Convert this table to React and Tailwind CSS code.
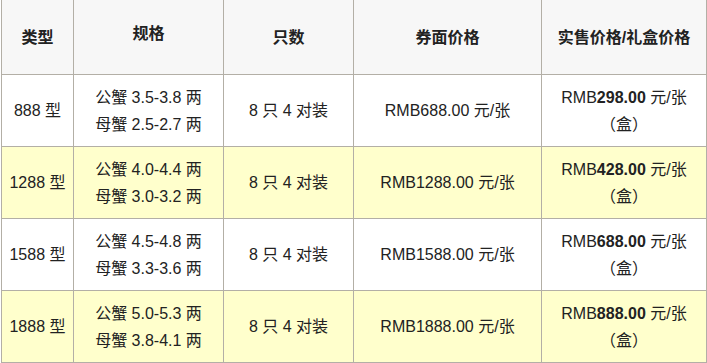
import React from 'react';

const rows = [
    { type: '888 型', male: '公蟹 3.5-3.8 两', female: '母蟹 2.5-2.7 两', face: 'RMB688.00 元/张', price: '298.00', alt: false },
    { type: '1288 型', male: '公蟹 4.0-4.4 两', female: '母蟹 3.0-3.2 两', face: 'RMB1288.00 元/张', price: '428.00', alt: true },
    { type: '1588 型', male: '公蟹 4.5-4.8 两', female: '母蟹 3.3-3.6 两', face: 'RMB1588.00 元/张', price: '688.00', alt: false },
    { type: '1888 型', male: '公蟹 5.0-5.3 两', female: '母蟹 3.8-4.1 两', face: 'RMB1888.00 元/张', price: '888.00', alt: true },
];

const Cell = ({ children, className = '' }) => (
    <div className={`flex flex-col items-center justify-center text-center border-r border-b border-[#b3afa6] ${className}`}>
        {children}
    </div>
);

const HeadCell = ({ children, className = '' }) => (
    <Cell className={`h-[75px] bg-[#f7f7f7] font-bold ${className}`}>{children}</Cell>
);

export default function App() {
    return (
        <div
            className="w-[707px] h-[363px] overflow-hidden bg-white text-[16px] leading-[27px] text-[#222]"
            style={{ fontFamily: '"Liberation Sans", Arial, "Noto Sans CJK SC", sans-serif' }}
        >
            <div className="ml-px grid grid-cols-[72px_150px_130px_188px_165px] border-l border-[#b3afa6]">
                {/* 表头 */}
                <HeadCell>类型</HeadCell>
                <HeadCell className="pb-2">规格</HeadCell>
                <HeadCell>只数</HeadCell>
                <HeadCell>券面价格</HeadCell>
                <HeadCell>实售价格/礼盒价格</HeadCell>

                {rows.map(r => {
                    const bg = r.alt ? 'bg-[#ffffcc]' : 'bg-white';
                    return (
                        <React.Fragment key={r.type}>
                            <Cell className={`h-[72px] ${bg}`}>{r.type}</Cell>
                            <Cell className={`h-[72px] ${bg}`}>
                                <span>{r.male}</span>
                                <span>{r.female}</span>
                            </Cell>
                            <Cell className={`h-[72px] ${bg}`}>8 只 4 对装</Cell>
                            <Cell className={`h-[72px] ${bg}`}>{r.face}</Cell>
                            <Cell className={`h-[72px] ${bg}`}>
                                <span>RMB<b>{r.price}</b> 元/张</span>
                                <span>（盒）</span>
                            </Cell>
                        </React.Fragment>
                    );
                })}
            </div>
        </div>
    );
}
